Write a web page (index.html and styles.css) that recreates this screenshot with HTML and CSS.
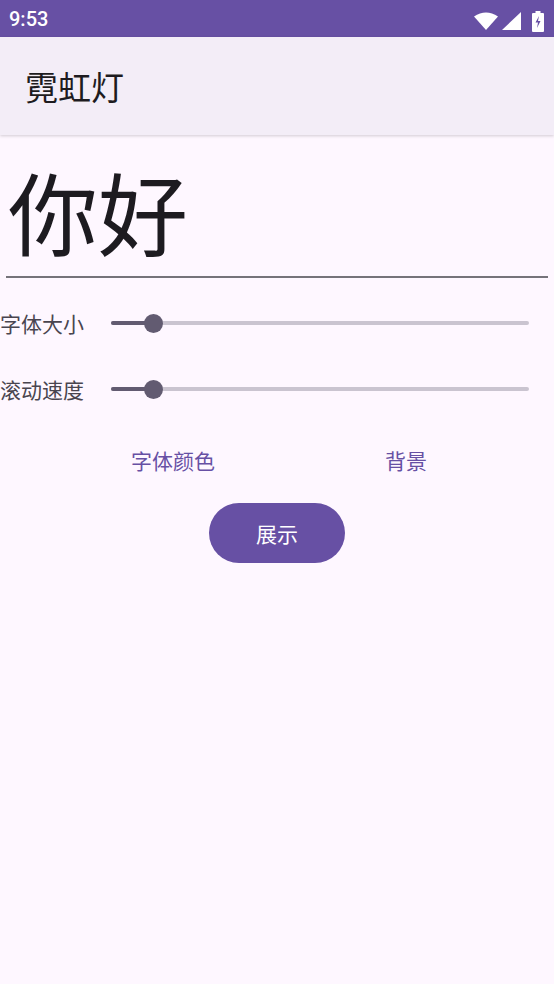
FILE: index.html
```html
<!DOCTYPE html>
<html lang="zh-CN">
<head>
  <meta charset="UTF-8">
  <meta name="viewport" content="width=device-width, initial-scale=1.0">
  <title>霓虹灯</title>
  <link rel="stylesheet" href="styles.css">
</head>
<body>
  <div class="status-bar">
    <span class="time">9:53</span>
    <div class="status-icons">
      <svg class="wifi" width="24" height="18" viewBox="0 0 24 18">
        <path d="M0 4.5 Q12 -3.5 24 4.5 L12 18 Z" fill="#fff"/>
      </svg>
      <svg class="signal" width="19" height="18" viewBox="0 0 19 18">
        <path d="M19 0 L19 18 L0 18 Z" fill="#fff"/>
      </svg>
      <svg class="battery" width="12" height="21" viewBox="0 0 12 21">
        <rect x="3.5" y="0" width="5" height="2" fill="#fff"/>
        <rect x="0" y="2" width="12" height="19" rx="1" fill="#fff"/>
        <path d="M7 5 L3.5 11.5 L6 11.5 L5 17 L8.5 10 L6 10 Z" fill="#6750a4"/>
      </svg>
    </div>
  </div>

  <header class="app-bar">
    <h1>霓虹灯</h1>
  </header>

  <main class="content">
    <div class="text-field">你好</div>

    <div class="slider-row">
      <span class="slider-label">字体大小</span>
      <div class="slider">
        <div class="track"></div>
        <div class="track-active" style="width: 42px"></div>
        <div class="thumb" style="left: 42px"></div>
      </div>
    </div>

    <div class="slider-row">
      <span class="slider-label">滚动速度</span>
      <div class="slider">
        <div class="track"></div>
        <div class="track-active" style="width: 42px"></div>
        <div class="thumb" style="left: 42px"></div>
      </div>
    </div>

    <div class="text-buttons">
      <button class="text-btn">字体颜色</button>
      <button class="text-btn">背景</button>
    </div>

    <div class="actions">
      <button class="filled-btn">展示</button>
    </div>
  </main>
</body>
</html>
```

FILE: styles.css
```css
html, body {
  margin: 0;
  padding: 0;
}
body {
  width: 554px;
  height: 984px;
  background: #fef7ff;
  font-family: "Noto Sans CJK SC", "Noto Sans", Roboto, sans-serif;
  overflow: hidden;
}

.status-bar {
  height: 37px;
  background: #6750a4;
  display: flex;
  align-items: center;
  justify-content: space-between;
  padding: 0 10px 0 9px;
  box-sizing: border-box;
}
.time {
  font-family: Roboto, "Noto Sans", sans-serif;
  font-size: 20px;
  font-weight: 500;
  color: #fff;
  line-height: 1;
}
.status-icons {
  display: flex;
  align-items: flex-end;
  gap: 4px;
  height: 21px;
  margin-top: 6px;
}
.status-icons .wifi { margin-bottom: 2px; }
.status-icons .signal { margin-bottom: 2px; margin-right: 7px; }

.app-bar {
  height: 98px;
  background: #f3edf7;
  display: flex;
  align-items: center;
  padding-left: 25px;
  box-shadow: 0 1px 3px rgba(0, 0, 0, 0.18);
  position: relative;
}
.app-bar h1 {
  margin: 0;
  font-size: 33px;
  font-weight: 400;
  color: #1d1b20;
}

.content {
  display: flex;
  flex-direction: column;
}

.text-field {
  margin: 0 6px;
  padding: 30px 0 21px 2px;
  font-size: 90px;
  line-height: 90px;
  color: #1d1b20;
  border-bottom: 2px solid #75737a;
}

.slider-row {
  display: flex;
  align-items: center;
  height: 48px;
  margin-top: 21px;
}
.slider-row + .slider-row {
  margin-top: 18px;
}
.slider-label {
  width: 84px;
  font-size: 21px;
  color: #49454f;
  white-space: nowrap;
}
.slider {
  position: relative;
  flex: 1;
  height: 20px;
  margin: 0 25px 0 27px;
}
.track {
  position: absolute;
  left: 0;
  right: 0;
  top: 8px;
  height: 4px;
  border-radius: 2px;
  background: #cac4d0;
}
.track-active {
  position: absolute;
  left: 0;
  top: 8px;
  height: 4px;
  border-radius: 2px;
  background: #625b71;
}
.thumb {
  position: absolute;
  top: 1px;
  width: 19px;
  height: 19px;
  margin-left: -9.5px;
  border-radius: 50%;
  background: #625b71;
}

.text-buttons {
  display: flex;
  justify-content: center;
  gap: 146px;
  margin-top: 27px;
  padding-left: 4px;
}
.text-btn {
  height: 40px;
  padding: 0 12px;
  border: none;
  background: none;
  font-family: inherit;
  font-size: 21px;
  color: #6750a4;
}

.actions {
  display: flex;
  justify-content: center;
  margin-top: 23px;
}
.filled-btn {
  width: 136px;
  height: 60px;
  border: none;
  border-radius: 30px;
  background: #6750a4;
  color: #fff;
  font-family: inherit;
  font-size: 21px;
}
```
